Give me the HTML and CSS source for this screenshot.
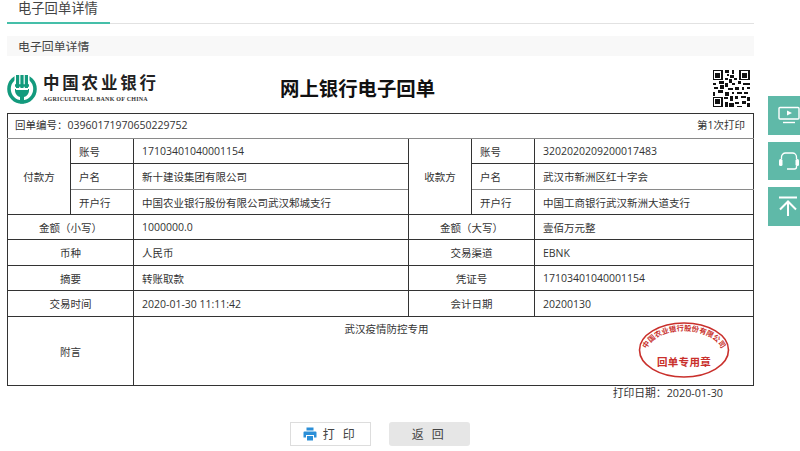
FILE: index.html
```html
<!DOCTYPE html>
<html lang="zh">
<head>
<meta charset="utf-8">
<title>电子回单详情</title>
<link rel="stylesheet" href="styles.css">
</head>
<body>
<main class="page">
  <nav class="tabs"><span class="tab">电子回单详情</span></nav>
  <h2 class="subtitle">电子回单详情</h2>
  <header class="receipt-head">
    <div class="logo">
      <svg class="logo-mark" width="30" height="30" viewBox="0 0 30 30">
        <circle cx="15" cy="15" r="13" fill="none" stroke="#139a7d" stroke-width="3.600"/>
        <rect x="7.500" y="0" width="15" height="8" fill="#fff"/>
        <path d="M9 1h3.200v13H9zM13.400 1h3.200v13h-3.200zM17.800 1H21v13h-3.200zM8 15h14v2a7 7 0 0 1-5 6v6.500h-4V23a7 7 0 0 1-5-6z" fill="#139a7d"/>
        <path d="M8 11.500h14" stroke="#139a7d" stroke-width="2.500" fill="none"/>
        <path d="M9 15.500h12" stroke="#fff" stroke-width="1" fill="none"/>
      </svg>
      <div class="logo-text">
        <div class="logo-cn">中国农业银行</div>
        <div class="logo-en">AGRICULTURAL BANK OF CHINA</div>
      </div>
    </div>
    <h1 class="receipt-title">网上银行电子回单</h1>
    <svg class="qr" width="38" height="37" viewBox="0 0 29 29" shape-rendering="crispEdges">
      <path fill="#111" d="M0 0h8v8H0zM1 1v6h6V1zM21 0h8v8h-8zM22 1v6h6V1zM0 21h8v8H0zM1 22v6h6v-6z" fill-rule="evenodd"/>
      <path fill="#111" d="M2 2h4v4H2zM23 2h4v4h-4zM2 23h4v4H2zM10 0h3v2h-3zM15 0h2v3h-2zM11 3h2v2h-2zM10 6h2v2h-2zM14 4h3v2h-3zM17 6h2v2h-2zM13 7h2v3h-2zM0 10h3v2H0zM5 9h4v2H5zM10 10h2v3h-2zM15 10h3v2h-3zM20 9h2v2h-2zM24 10h5v2h-5zM1 13h3v2H1zM6 12h3v3H6zM12 14h4v2h-4zM18 13h3v3h-3zM23 13h2v3h-2zM27 13h2v2h-2zM0 17h2v3H0zM4 16h4v2H4zM10 17h3v3h-3zM15 17h2v2h-2zM19 17h4v2h-4zM25 17h3v2h-3zM9 21h3v2H9zM14 20h2v4h-2zM18 20h2v3h-2zM22 20h4v2h-4zM27 21h2v3h-2zM10 25h2v4h-2zM13 26h4v3h-4zM18 25h3v2h-3zM23 24h3v3h-3zM19 28h4v1h-4zM27 26h2v3h-2z"/>
    </svg>
  </header>
  <table class="receipt">
    <colgroup>
      <col class="c1"><col class="c2"><col class="c3"><col class="c4"><col class="c5"><col class="c6">
    </colgroup>
    <tr class="r25 soft">
      <td colspan="6" class="top">
        <div class="top-row"><span>回单编号：03960171970650229752</span><span>第1次打印</span></div>
      </td>
    </tr>
    <tr class="r25">
      <td rowspan="3" class="label">付款方</td><td class="sub">账号</td><td class="val">17103401040001154</td>
      <td rowspan="3" class="label">收款方</td><td class="sub">账号</td><td class="val">3202020209200017483</td>
    </tr>
    <tr class="r26 soft">
      <td class="sub">户名</td><td class="val">新十建设集团有限公司</td>
      <td class="sub">户名</td><td class="val">武汉市新洲区红十字会</td>
    </tr>
    <tr class="r25">
      <td class="sub">开户行</td><td class="val">中国农业银行股份有限公司武汉邾城支行</td>
      <td class="sub">开户行</td><td class="val">中国工商银行武汉新洲大道支行</td>
    </tr>
    <tr class="r25">
      <td colspan="2" class="label">金额（小写）</td><td class="val">1000000.0</td>
      <td colspan="2" class="label">金额（大写）</td><td class="val">壹佰万元整</td>
    </tr>
    <tr class="r26">
      <td colspan="2" class="label">币种</td><td class="val">人民币</td>
      <td colspan="2" class="label">交易渠道</td><td class="val">EBNK</td>
    </tr>
    <tr class="r25">
      <td colspan="2" class="label">摘要</td><td class="val">转账取款</td>
      <td colspan="2" class="label">凭证号</td><td class="val">17103401040001154</td>
    </tr>
    <tr class="r26">
      <td colspan="2" class="label">交易时间</td><td class="val">2020-01-30 11:11:42</td>
      <td colspan="2" class="label">会计日期</td><td class="val">20200130</td>
    </tr>
    <tr class="r69">
      <td colspan="2" class="label">附言</td>
      <td colspan="4" class="note">
        <div class="note-text">武汉疫情防控专用</div>
        <svg class="stamp" width="94" height="60" viewBox="0 0 94 60">
          <defs><path id="arc" d="M8 34C14 3 80 3 86 34"/></defs>
          <ellipse cx="47" cy="30" rx="44.500" ry="27" fill="none" stroke="#c9302c" stroke-width="1.600"/>
          <text class="stamp-arc"><textPath href="#arc" startOffset="50%" text-anchor="middle">中国农业银行股份有限公司</textPath></text>
          <text class="stamp-main" x="47" y="46" text-anchor="middle">回单专用章</text>
        </svg>
      </td>
    </tr>
  </table>
  <div class="print-date">打印日期：2020-01-30</div>
  <div class="actions">
    <button class="btn btn-print">
      <svg width="14" height="14" viewBox="0 0 14 14"><path fill="#2b8fd8" d="M3.500 0.500h7v3h-7zM1.500 4.500h11a1 1 0 0 1 1 1v5h-2.500V8h-8v2.500H0.500v-5a1 1 0 0 1 1-1zM4 9h6v4.500H4z"/></svg>
      <span>打 印</span>
    </button>
    <button class="btn btn-back">返 回</button>
  </div>
</main>
<aside class="side">
  <a class="side-btn"><svg width="22" height="18" viewBox="0 0 22 18" fill="none" stroke="#fff" stroke-width="1.400"><rect x="1" y="1.500" width="20" height="11.500" rx="1"/><path d="M5 16.500h12"/><path d="M9 4.500l5 2.500-5 2.500z" fill="#fff" stroke="none"/></svg></a>
  <a class="side-btn"><svg width="22" height="18" viewBox="0 0 22 18" fill="none" stroke="#fff" stroke-width="1.300"><path d="M3.500 7V5a4 4 0 0 1 4-4h7a4 4 0 0 1 4 4v2M18.500 14v1a2 2 0 0 1-2 2H9"/><rect x="1" y="7" width="3.500" height="7" rx="1.500" fill="#fff" stroke="none"/><rect x="17.500" y="7" width="3.500" height="7" rx="1.500" fill="#fff" stroke="none"/></svg></a>
  <a class="side-btn"><svg width="20" height="20" viewBox="0 0 20 20" fill="none" stroke="#fff" stroke-width="2"><path d="M1 1.500h18M10 20V6M2 13.500L10 5.500l8 8"/></svg></a>
</aside>
</body>
</html>
```
FILE: styles.css
```css
* { box-sizing: border-box; }
html, body { margin: 0; padding: 0; background: #fff; }
body {
  font-family: "Open Sans", "Noto Sans CJK SC", sans-serif;
  font-size: 10.500px;
  color: #333;
  overflow: hidden;
}
.page { width: 747px; margin-left: 7px; height: 451px; }
.tabs { height: 24px; border-bottom: 1px solid #e2e2e2; display: flex; }
.tab {
  width: 103px; height: 23.500px; padding-left: 11px;
  font-size: 13.300px; line-height: 16px; color: #444;
  border-bottom: 2.500px solid #45bfa9;
}
.subtitle {
  margin: 12px 0 0; height: 20px; padding-left: 11px;
  font-size: 11.900px; line-height: 20px; font-weight: 400; color: #444;
  background: #f8f8f8;
}
.receipt-head {
  display: flex; align-items: center;
  height: 57px; padding: 8px 4px 0 0;
}
.logo { display: flex; align-items: center; gap: 6px; flex: 0 0 273px; }
.logo-text { display: flex; flex-direction: column; white-space: nowrap; }
.logo-cn {
  font-family: "Liberation Serif", "Noto Sans CJK SC", serif;
  font-weight: 700; font-size: 16.500px; line-height: 20px; letter-spacing: 2.800px; color: #222;
}
.logo-en {
  font-family: "Liberation Serif", serif; font-weight: 700;
  font-size: 6px; line-height: 8px; letter-spacing: 0.250px; color: #333; margin-top: 1px;
}
.receipt-title {
  margin: 0; flex: 1; font-size: 19.400px; font-weight: 700; color: #111; line-height: 26px;
}
.qr { display: block; }
.receipt { width: 746px; table-layout: fixed; border-collapse: collapse; }
.c1, .c2, .c4, .c5 { width: 63px; }
.c3 { width: 275px; }
.c6 { width: 219px; }
.receipt td { border: 1px solid #333; padding: 0; }
.soft td { border-bottom-color: #8a8a8a; }
.r25 { height: 25px; }
.r26 { height: 26px; }
.r69 { height: 69px; }
.label { text-align: center; }
.receipt .sub { padding-left: 8px; }
.receipt .val { padding-left: 8px; }
.receipt .top { padding: 0 8px 3px 7px; }
.top-row { display: flex; justify-content: space-between; }
.note { position: relative; vertical-align: top; text-align: center; }
.note-text { padding-top: 4px; margin-right: 114px; }
.stamp { position: absolute; right: 22px; top: 3px; }
.stamp-arc { font-size: 7.300px; font-weight: 700; fill: #c9302c; }
.stamp-main { font-size: 10.500px; font-weight: 700; fill: #c9302c; letter-spacing: 0.300px; }
.print-date { text-align: right; padding-right: 31px; line-height: 14px; font-size: 10.800px; }
.actions { display: flex; justify-content: center; gap: 18px; margin-top: 22px; padding-right: 2px; }
.btn {
  width: 81px; height: 24px; font: inherit; font-size: 12px; letter-spacing: 2.500px; color: #444;
  display: flex; align-items: center; justify-content: center; gap: 6px; padding: 0;
}
.btn-print { background: #fff; border: 1px solid #ddd; }
.btn-back { background: #e6e6e6; border: none; border-radius: 3px; }
.side {
  position: fixed; right: 0; top: 96px; width: 32px;
  display: flex; flex-direction: column; gap: 7px;
}
.side-btn {
  width: 32px; height: 38.500px; background: #5fb9a8; overflow: hidden;
  display: flex; align-items: center; padding-left: 10px;
}
```
